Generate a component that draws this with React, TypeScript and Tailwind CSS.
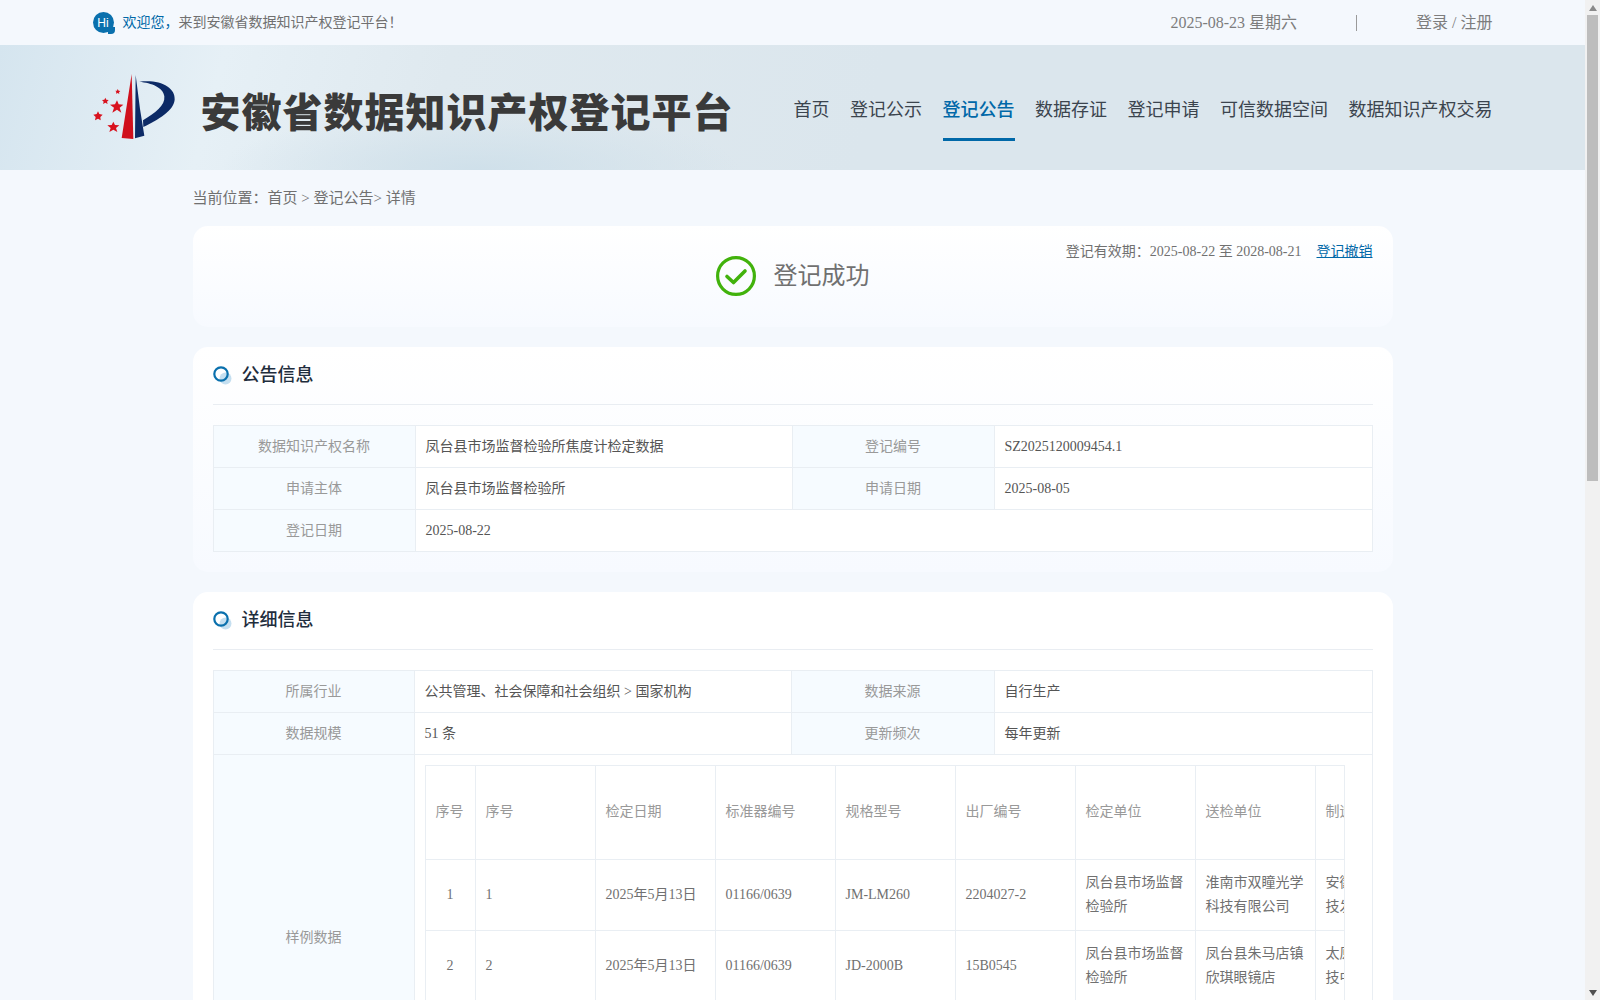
import React from "react";

const FONT = "font-['Liberation_Serif','Noto_Sans_CJK_SC',serif]";
const NAV = ["首页", "登记公示", "登记公告", "数据存证", "登记申请", "可信数据空间", "数据知识产权交易"];

const labelCell = "border border-[#e9eef3] bg-[#f6fbff] text-center font-normal text-[#999]";
const valueCell = "border border-[#e9eef3] bg-white px-[10px] text-left text-[#555]";
const innerCell = "border border-[#e9eef3] px-[10px] align-middle font-normal leading-6";

const HEADERS = ["序号", "序号", "检定日期", "标准器编号", "规格型号", "出厂编号", "检定单位", "送检单位", "制造单位"];
const ROWS = [
  ["1", "1", "2025年5月13日", "01166/0639", "JM-LM260", "2204027-2", "凤台县市场监督检验所", "淮南市双瞳光学科技有限公司", "安徽光学仪器科技发展有限公司"],
  ["2", "2", "2025年5月13日", "01166/0639", "JD-2000B", "15B0545", "凤台县市场监督检验所", "凤台县朱马店镇欣琪眼镜店", "太原光学仪器科技中心有限公司"],
  ["3", "3", "2025年5月13日", "01166/0639", "JD-2000B", "15B0546", "凤台县市场监督检验所", "凤台县朱马店镇欣琪眼镜店", "太原光学仪器科技中心有限公司"],
];

function Logo() {
  return (
    <svg width="120" height="90" viewBox="0 0 360 270" className="shrink-0">
      <path d="M155 45 L125 237 L160 240 Z" fill="#d0101c" />
      <path d="M167 48 L165 238 L193 230 L180 150 Z" fill="#0c2a66" />
      <path d="M178 68 C240 60 287 85 284 122 C281 155 235 182 190 204 L189 184 C225 162 256 140 253 112 C250 85 215 72 178 68 Z" fill="#0c2a66" />
      <g fill="#d8121e">
        <polygon points="113,90 116,95 121,96 117,100 118,105 113,102 108,104 109,99 106,95 111,95" />
        <polygon points="76,116 79,122 86,123 81,128 83,135 76,131 69,135 71,128 66,123 73,122" />
        <polygon points="111,124 116,136 130,137 119,146 124,161 111,152 97,161 102,146 90,137 105,136" />
        <polygon points="54,157 58,165 68,167 61,174 62,184 54,179 45,184 47,174 40,167 50,165" />
        <polygon points="100,188 105,198 118,199 108,207 112,219 100,212 88,219 92,207 82,199 95,198" />
      </g>
    </svg>
  );
}

function SectionTitle({ children }: { children: React.ReactNode }) {
  return (
    <div className="flex h-[58px] items-center border-b border-[#e9edf2]">
      <svg width="20" height="20" viewBox="0 0 20 20" className="shrink-0">
        <circle cx="12.5" cy="12.5" r="6" fill="#c5dff0" />
        <circle cx="8" cy="8" r="6.7" fill="none" stroke="#0a70ad" strokeWidth="2.2" />
      </svg>
      <h2 className="ml-[9px] text-[18px] font-medium text-[#1f2d3d]">{children}</h2>
    </div>
  );
}

export default function App() {
  return (
    <div className={`flex h-screen overflow-hidden bg-[#f4f8fd] text-[14px] ${FONT}`}>
      <div className="min-w-0 flex-1 overflow-hidden">
        <div className="h-[45px]">
          <div className="mx-auto flex h-full w-[1400px] items-center justify-between">
            <div className="flex items-center">
              <div className="relative flex h-[21px] w-[21px] items-center justify-center rounded-full bg-[#0a70ad] font-['Liberation_Sans',sans-serif] text-[12px] leading-none text-white">
                Hi
                <span className="absolute bottom-[-1px] right-[-1px] h-[7px] w-[7px] rounded-br-[4px] bg-[#0a70ad]" />
              </div>
              <span className="ml-[9px] text-[#0068a8]">欢迎您，</span>
              <span className="text-[#707070]">来到安徽省数据知识产权登记平台！</span>
            </div>
            <div className="flex items-center text-[16px] text-[#7d7d7d]">
              <span>2025-08-23 星期六</span>
              <span className="mx-[59px] h-[16px] w-px bg-[#9a9a9a]" />
              <span>登录 / 注册</span>
            </div>
          </div>
        </div>

        <div className="h-[125px] bg-[#dbe6ed] bg-[radial-gradient(ellipse_260px_60px_at_480px_125px,#cfe0ea_0%,transparent_100%),linear-gradient(105deg,#d5e5ef_0%,#e6f0f6_14%,#dfe9ef_28%,#dbe6ed_55%)]">
          <div className="mx-auto flex h-full w-[1400px] items-center justify-between">
            <div className="flex items-center">
              <div className="-mt-[8px] -ml-[13px]">
                <Logo />
              </div>
              <div className="ml-[1px] mt-[5px] font-['Noto_Sans_CJK_SC',sans-serif] text-[40px] font-black leading-none tracking-[1px] text-[#3a3a3a]">
                安徽省数据知识产权登记平台
              </div>
            </div>
            <nav className="mt-[5px] flex gap-[20.5px] text-[18px] text-[#3b444e]">
              {NAV.map((n) => (
                <span
                  key={n}
                  className={
                    n === "登记公告"
                      ? "h-[61px] border-b-[3px] border-[#0068a8] font-medium leading-[61px] text-[#0068a8]"
                      : "h-[61px] leading-[61px]"
                  }
                >
                  {n}
                </span>
              ))}
            </nav>
          </div>
        </div>

        <main className="mx-auto w-[1200px]">
          <div className="flex h-[56px] items-center text-[15px] text-[#707070]">当前位置：首页 &gt; 登记公告&gt; 详情</div>

          <section className="grid h-[101px] grid-cols-[1fr_auto_1fr] rounded-[15px] bg-gradient-to-b from-white to-[#f7faff] px-[20px]">
            <div />
            <div className="flex items-center gap-[18px] pb-[2px]">
              <svg width="40" height="40" viewBox="0 0 40 40">
                <circle cx="20" cy="20" r="18.4" fill="none" stroke="#41b20c" strokeWidth="3.2" />
                <path d="M11 20.5 L17.5 26.5 L29 15" fill="none" stroke="#41b20c" strokeWidth="3.6" strokeLinecap="round" strokeLinejoin="round" />
              </svg>
              <span className="text-[24px] text-[#707070]">登记成功</span>
            </div>
            <div className="flex justify-end pt-[16px] leading-5 text-[#707070]">
              <span>登记有效期：2025-08-22 至 2028-08-21</span>
              <a className="ml-[15px] text-[#0068a8] underline">登记撤销</a>
            </div>
          </section>

          <section className="mt-5 h-[225px] rounded-[15px] bg-gradient-to-b from-white to-[#f7faff] px-5">
            <SectionTitle>公告信息</SectionTitle>
            <table className="mt-5 w-[1159px] table-fixed border-collapse">
              <colgroup>
                <col className="w-[202px]" />
                <col className="w-[377px]" />
                <col className="w-[202px]" />
                <col className="w-[378px]" />
              </colgroup>
              <tbody>
                <tr className="h-[42px]">
                  <th className={labelCell}>数据知识产权名称</th>
                  <td className={valueCell}>凤台县市场监督检验所焦度计检定数据</td>
                  <th className={labelCell}>登记编号</th>
                  <td className={valueCell}>SZ2025120009454.1</td>
                </tr>
                <tr className="h-[42px]">
                  <th className={labelCell}>申请主体</th>
                  <td className={valueCell}>凤台县市场监督检验所</td>
                  <th className={labelCell}>申请日期</th>
                  <td className={valueCell}>2025-08-05</td>
                </tr>
                <tr className="h-[42px]">
                  <th className={labelCell}>登记日期</th>
                  <td className={valueCell} colSpan={3}>2025-08-22</td>
                </tr>
              </tbody>
            </table>
          </section>

          <section className="mt-5 rounded-[15px] bg-white px-5">
            <SectionTitle>详细信息</SectionTitle>
            <table className="mt-5 w-[1159px] table-fixed border-collapse">
              <colgroup>
                <col className="w-[201px]" />
                <col className="w-[377px]" />
                <col className="w-[203px]" />
                <col className="w-[378px]" />
              </colgroup>
              <tbody>
                <tr className="h-[42px]">
                  <th className={labelCell}>所属行业</th>
                  <td className={valueCell}>公共管理、社会保障和社会组织 &gt; 国家机构</td>
                  <th className={labelCell}>数据来源</th>
                  <td className={valueCell}>自行生产</td>
                </tr>
                <tr className="h-[42px]">
                  <th className={labelCell}>数据规模</th>
                  <td className={valueCell}>51 条</td>
                  <th className={labelCell}>更新频次</th>
                  <td className={valueCell}>每年更新</td>
                </tr>
                <tr className="h-[366px]">
                  <th className={labelCell}>样例数据</th>
                  <td className="border border-[#e9eef3] bg-white px-[10px] py-[10px] align-top" colSpan={3}>
                    <div className="w-[920px] overflow-hidden border-r border-[#e9eef3]">
                      <table className="w-[1010px] table-fixed border-collapse">
                        <colgroup>
                          <col className="w-[50px]" />
                          <col className="w-[120px]" />
                          <col className="w-[120px]" />
                          <col className="w-[120px]" />
                          <col className="w-[120px]" />
                          <col className="w-[120px]" />
                          <col className="w-[120px]" />
                          <col className="w-[120px]" />
                          <col className="w-[120px]" />
                        </colgroup>
                        <thead>
                          <tr className="h-[94px]">
                            {HEADERS.map((h, i) => (
                              <th key={i} className={`${innerCell} pb-[2px] text-left text-[#999]`}>{h}</th>
                            ))}
                          </tr>
                        </thead>
                        <tbody>
                          {ROWS.map((r) => (
                            <tr key={r[0]} className="h-[71px]">
                              {r.map((c, i) => (
                                <td key={i} className={`${innerCell} text-[#707070] ${i === 0 ? "text-center" : "text-left"}`}>{c}</td>
                              ))}
                            </tr>
                          ))}
                        </tbody>
                      </table>
                    </div>
                  </td>
                </tr>
              </tbody>
            </table>
          </section>
        </main>
      </div>

      <div className="flex h-full w-[15px] shrink-0 flex-col items-center bg-[#f1f1f1]">
        <div className="flex h-[15px] items-center justify-center">
          <svg width="8" height="6" viewBox="0 0 8 6"><path d="M4 0 L8 6 L0 6 Z" fill="#8a8a8a" /></svg>
        </div>
        <div className="h-[466px] w-[11px] bg-[#bdbdbd]" />
        <div className="flex-1" />
        <div className="flex h-[15px] items-center justify-center">
          <svg width="8" height="6" viewBox="0 0 8 6"><path d="M0 0 L8 0 L4 6 Z" fill="#505050" /></svg>
        </div>
      </div>
    </div>
  );
}
